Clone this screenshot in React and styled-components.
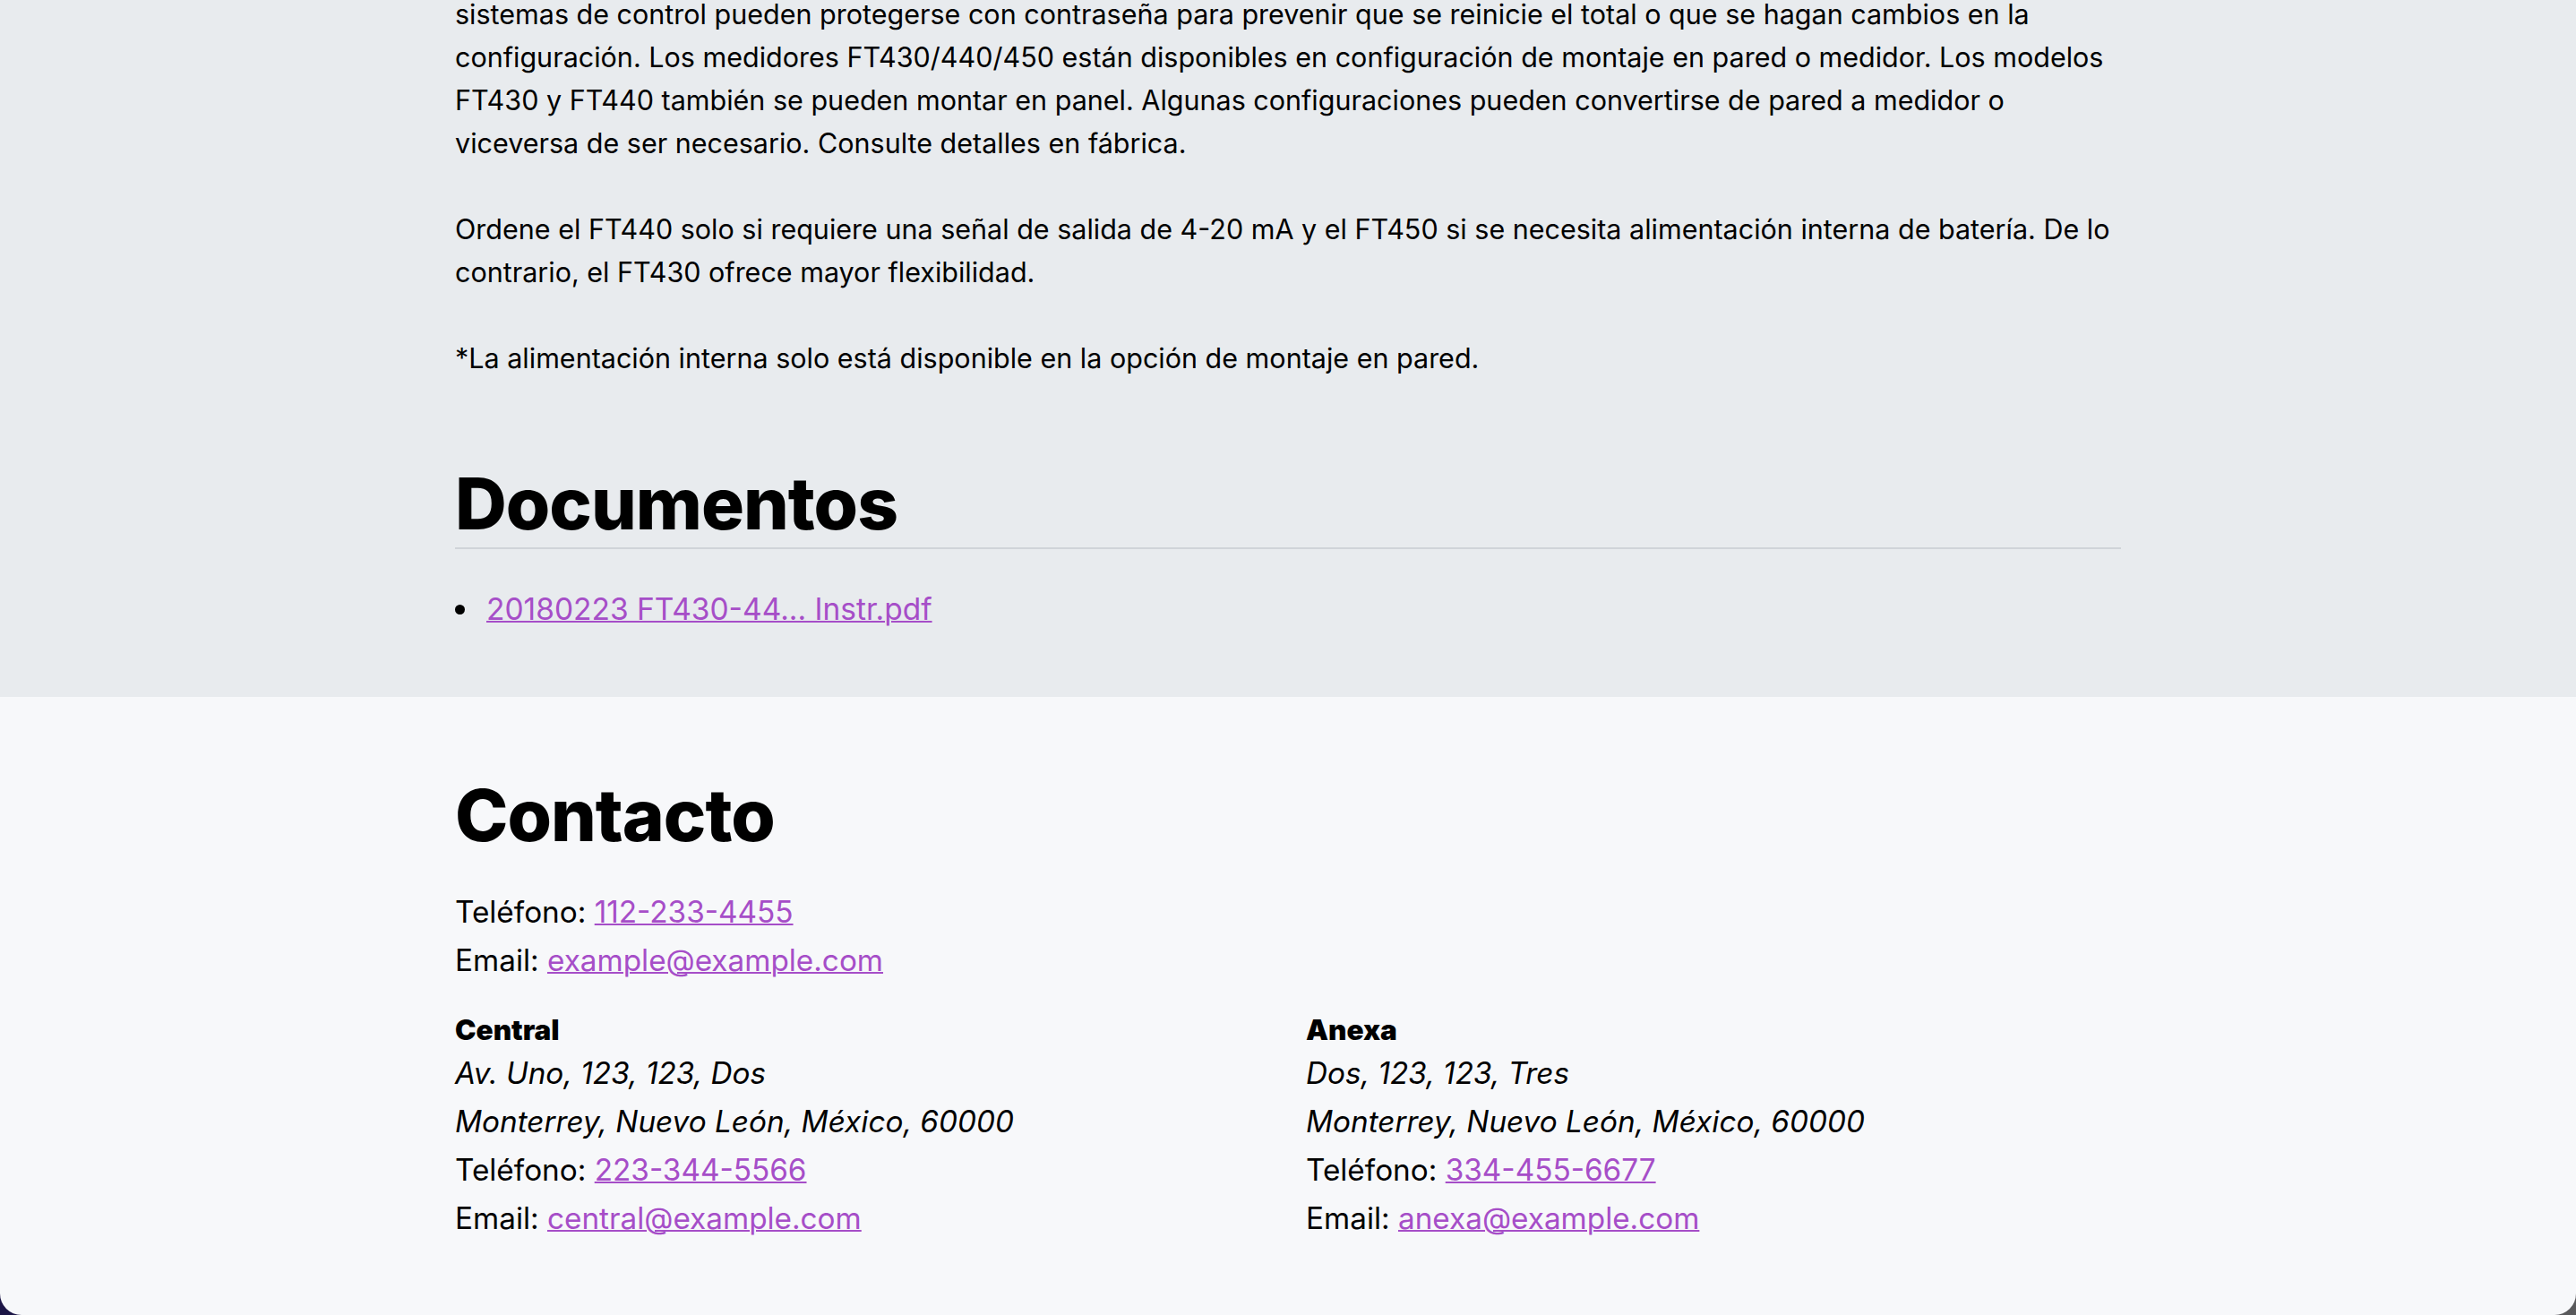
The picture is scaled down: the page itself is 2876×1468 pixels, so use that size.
import React from "react";
import styled, {createGlobalStyle} from "styled-components";

const GlobalStyle = createGlobalStyle`
html, body {
  margin: 0;
  padding: 0;
  background: linear-gradient(90deg, #1c1646 0%, #2a2540 50%, #5a5a5c 100%);
}
body {
  font-family: Inter, "Noto Sans", sans-serif;
  color: #000;
}
`;

const Page = styled.div`
min-height: 100vh;
display: flex;
flex-direction: column;
border-bottom-left-radius: 24px;
border-bottom-right-radius: 24px;
overflow: hidden;
`;

const Section = styled.section`
background-color: ${props => props.light ? "#f7f8fa" : "#e8ebee"};
padding: ${props => props.light ? "84px 0 0" : "0 0 74px"};
flex: ${props => props.light ? 1 : "none"};
`;

const Container = styled.div`
width: 1860px;
margin: 0 auto;
`;

const Paragraph = styled.p`
font-size: 30.5px;
line-height: 48px;
margin: 0 0 48px;

&:first-child {
  margin-top: -8px;
}
`;

const Heading = styled.h2`
font-size: 80px;
line-height: 96px;
font-weight: 800;
letter-spacing: -1px;
margin: ${props => props.ruled ? "90px 0 0" : "0"};
padding-bottom: ${props => props.ruled ? "1px" : "0"};
border-bottom: ${props => props.ruled ? "2px solid #d0d4d9" : "none"};
`;

const DocList = styled.ul`
margin: 43px 0 0;
padding: 0;
list-style: none;
font-size: 33.5px;
line-height: 48px;
`;

const DocItem = styled.li`
display: flex;
align-items: center;

&::before {
  content: "";
  width: 11px;
  height: 11px;
  border-radius: 50%;
  background-color: #000;
  margin-right: 24px;
  flex: none;
}
`;

const Link = styled.a`
color: #a64ec8;
text-decoration: underline;
text-decoration-thickness: 2px;
`;

const ContactLines = styled.div`
margin-top: 33px;
font-size: 33.3px;
line-height: 54px;
`;

const Line = styled.div`
font-style: ${props => props.italic ? "italic" : "normal"};
`;

const Offices = styled.div`
margin-top: 29px;
display: grid;
grid-template-columns: 1fr 1fr;
column-gap: 40px;
`;

const Office = styled.div`
font-size: 33.3px;
line-height: 54px;
`;

const OfficeName = styled.div`
font-size: 31.5px;
line-height: 43px;
font-weight: 900;
`;

const offices = [
  {
    name: "Central",
    street: "Av. Uno, 123, 123, Dos",
    city: "Monterrey, Nuevo León, México, 60000",
    phone: "223-344-5566",
    email: "central@example.com"
  },
  {
    name: "Anexa",
    street: "Dos, 123, 123, Tres",
    city: "Monterrey, Nuevo León, México, 60000",
    phone: "334-455-6677",
    email: "anexa@example.com"
  }
];

const App = () => {
  return (
    <Page>
      <GlobalStyle/>

      <Section>
        <Container>
          <Paragraph>
            sistemas de control pueden protegerse con contraseña para prevenir que se reinicie el total o que se hagan cambios en la
            configuración. Los medidores FT430/440/450 están disponibles en configuración de montaje en pared o medidor. Los modelos
            FT430 y FT440 también se pueden montar en panel. Algunas configuraciones pueden convertirse de pared a medidor o
            viceversa de ser necesario. Consulte detalles en fábrica.
          </Paragraph>
          <Paragraph>
            Ordene el FT440 solo si requiere una señal de salida de 4-20 mA y el FT450 si se necesita alimentación interna de batería. De lo
            contrario, el FT430 ofrece mayor flexibilidad.
          </Paragraph>
          <Paragraph>
            *La alimentación interna solo está disponible en la opción de montaje en pared.
          </Paragraph>

          <Heading ruled>Documentos</Heading>
          <DocList>
            <DocItem><Link href="#">20180223 FT430-44... Instr.pdf</Link></DocItem>
          </DocList>
        </Container>
      </Section>

      <Section light>
        <Container>
          <Heading>Contacto</Heading>
          <ContactLines>
            <Line>Teléfono: <Link href="#">112-233-4455</Link></Line>
            <Line>Email: <Link href="#">example@example.com</Link></Line>
          </ContactLines>

          <Offices>
            {offices.map(office =>
              <Office key={office.name}>
                <OfficeName>{office.name}</OfficeName>
                <Line italic>{office.street}</Line>
                <Line italic>{office.city}</Line>
                <Line>Teléfono: <Link href="#">{office.phone}</Link></Line>
                <Line>Email: <Link href="#">{office.email}</Link></Line>
              </Office>
            )}
          </Offices>
        </Container>
      </Section>
    </Page>
  );
};

export default App;
